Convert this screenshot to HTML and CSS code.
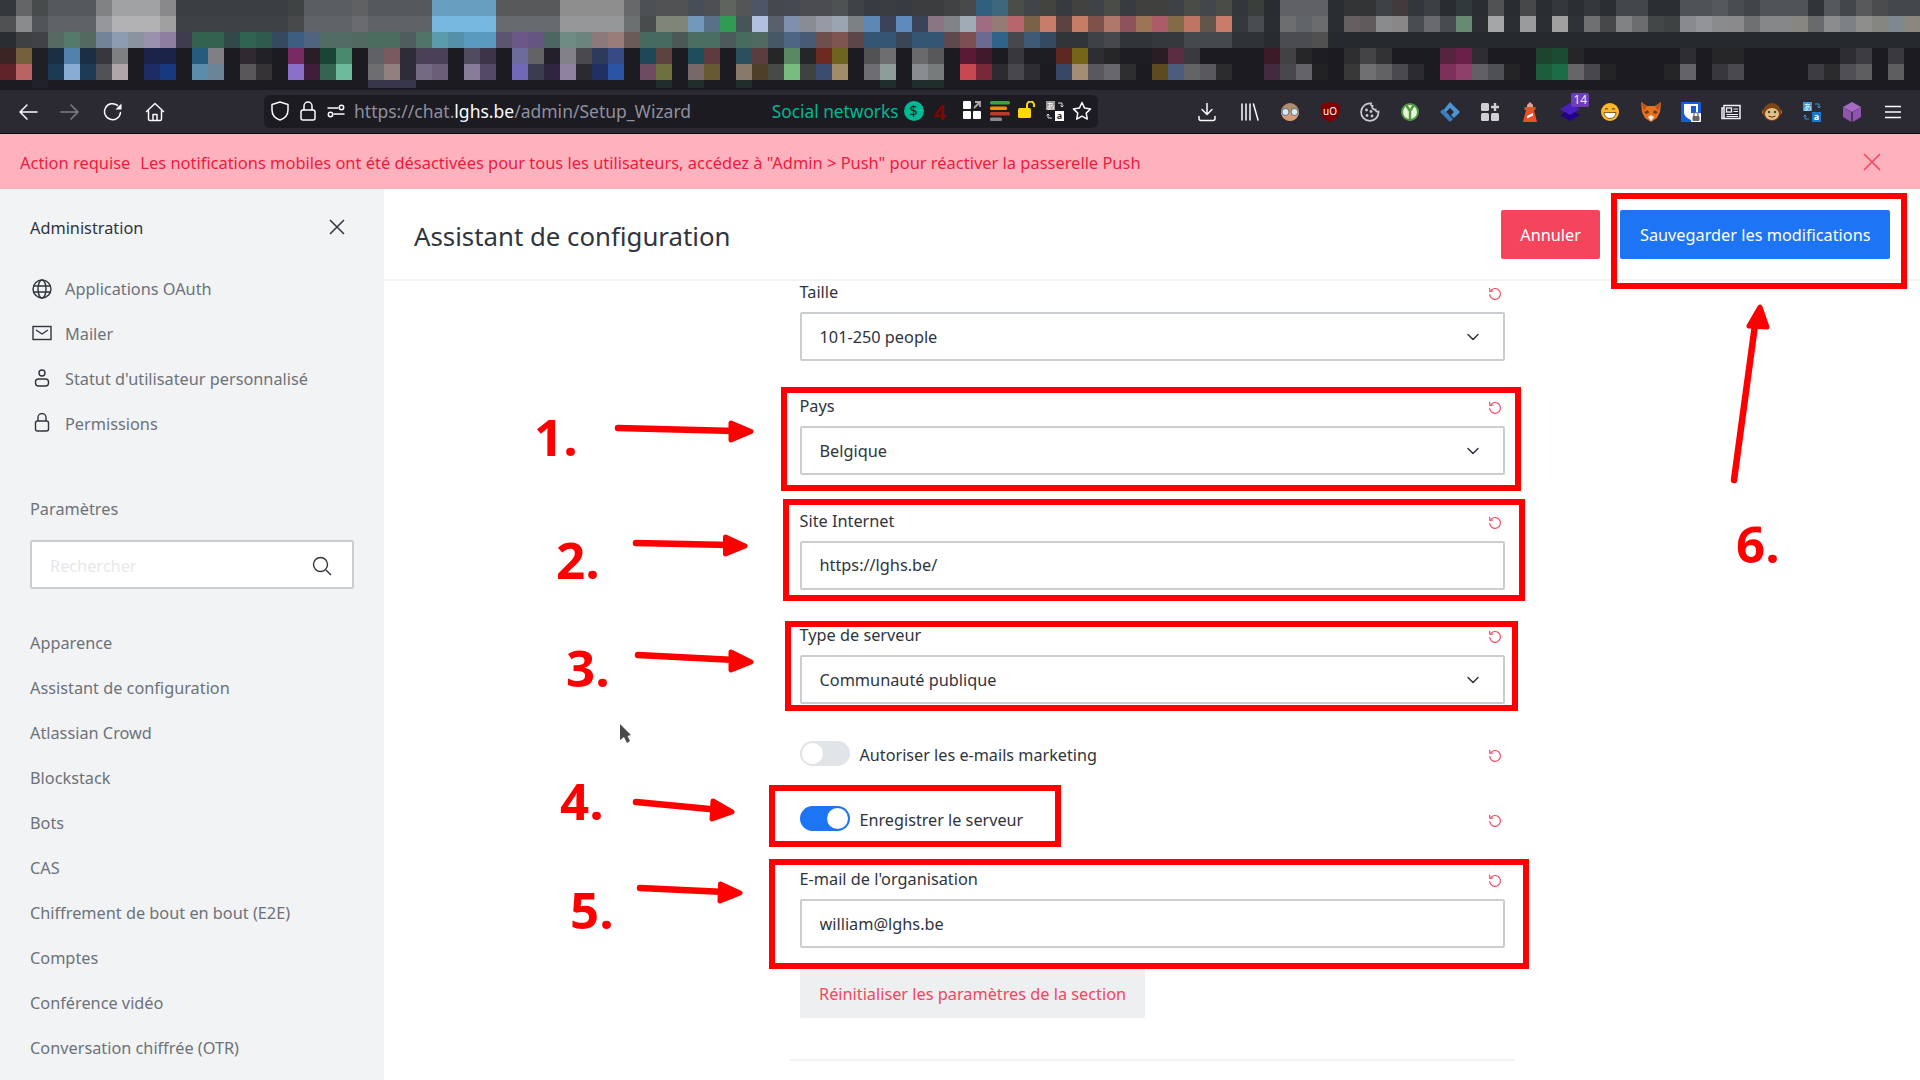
FILE: index.html
```html
<!DOCTYPE html>
<html lang="fr">
<head>
    <meta charset="UTF-8">
    <title>Assistant de configuration</title>
    <link rel="stylesheet" href="styles.css">
</head>
<body>
    <svg class="defs" width="0" height="0">
        <symbol id="i-reset" viewBox="0 0 14 14">
            <path d="M3.2 3.1A5.4 5.4 0 1 1 1.7 7.6" fill="none" stroke="currentColor" stroke-width="1.2" stroke-linecap="round"/>
            <path d="M1.6 1.4l.3 3 3-.4" fill="none" stroke="currentColor" stroke-width="1.2" stroke-linecap="round" stroke-linejoin="round"/>
        </symbol>
        <symbol id="i-chevron" viewBox="0 0 14 14">
            <path d="M2 4.5l5 5 5-5" fill="none" stroke="currentColor" stroke-width="1.5" stroke-linecap="round" stroke-linejoin="round"/>
        </symbol>
    </svg>

    <!-- blurred tabs -->
    <div id="tabstrip"></div>

    <div class="toolbar">
        <div class="tb-btn"><svg width="20" height="20" viewBox="0 0 20 20"><path d="M19 10H2m0 0l7-7M2 10l7 7" class="ln"/></svg></div>
        <div class="tb-btn off"><svg width="20" height="20" viewBox="0 0 20 20"><path d="M1 10h17m0 0l-7-7m7 7l-7 7" class="ln"/></svg></div>
        <div class="tb-btn nudge"><svg width="20" height="20" viewBox="0 0 20 20"><path d="M17.5 10.5A8 8 0 1 1 14.5 3.4" class="ln"/><path d="M18.5 1.5v6h-6z" fill="#fbfbfe"/></svg></div>
        <div class="tb-btn nudge"><svg width="20" height="20" viewBox="0 0 20 20"><path d="M1.5 9.5L10 1.5l8.500 8M3.500 8.500V17a1.500 1.500 0 0 0 1.500 1.500h10a1.500 1.500 0 0 0 1.500-1.500V8.500M8 18.500V12.500h4v6" class="ln"/></svg></div>

        <div class="urlbar">
            <div class="ub-icons">
                <svg width="18" height="20" viewBox="0 0 18 20"><path d="M9 1l8 2.500V9c0 5-3.500 8.500-8 10C4.500 17.500 1 14 1 9V3.500z" class="ln"/></svg>
                <svg width="16" height="20" viewBox="0 0 16 20"><rect x="1" y="9" width="14" height="10" rx="2" class="ln"/><path d="M4 9V5a4 4 0 0 1 8 0v4" class="ln"/></svg>
                <svg width="18" height="14" viewBox="0 0 18 14"><path d="M1 4h10M7 10h10" class="ln"/><circle cx="14.500" cy="3.500" r="2.200" class="ln"/><circle cx="3.500" cy="10.500" r="2.200" class="ln"/></svg>
            </div>
            <div class="url">https://chat.<b>lghs.be</b>/admin/Setup_Wizard</div>
            <div class="ub-right">
                <span class="social">Social networks</span>
                <span class="dollar">$</span>
                <span class="count">4</span>
                <div class="ub-acts">
                    <div class="ub-act"><svg width="18" height="18" viewBox="0 0 18 18"><rect x="0" y="0" width="8" height="8" rx="1" fill="#fff"/><rect x="0" y="10" width="8" height="8" rx="1" fill="#fff"/><rect x="10" y="10" width="8" height="8" rx="1" fill="#fff"/><path d="M11 7l6-6m-5 0h5v5" fill="none" stroke="#aaa" stroke-width="1.800"/></svg></div>
                    <div class="ub-act"><svg width="20" height="20" viewBox="0 0 20 20"><rect x="0" y="0" width="20" height="3.500" rx="1.500" fill="#43a047"/><rect x="0" y="5.500" width="17" height="3.500" rx="1.500" fill="#fb8c00"/><rect x="0" y="11" width="20" height="3.500" rx="1.500" fill="#c0392b"/><rect x="0" y="16.500" width="12" height="3.500" rx="1.500" fill="#8a8a8a"/></svg></div>
                    <div class="ub-act"><svg width="18" height="18" viewBox="0 0 18 18"><rect x="0" y="7" width="13" height="10" rx="1.500" fill="#ffd60a"/><path d="M9 7V4a3.500 3.500 0 0 1 7 0v2" fill="none" stroke="#ffd60a" stroke-width="2"/></svg></div>
                    <div class="ub-act"><svg width="18" height="20" viewBox="0 0 18 20"><rect x="0" y="0" width="9" height="9" fill="#999"/><text x="4.500" y="7.500" class="tr-a" fill="#fff">あ</text><path d="M12 2h4v4m-1.500-1.500L16 6l1.500-1.500" fill="none" stroke="#ddd" stroke-width="1"/><path d="M6 17H2v-4m-1.500 1.500L2 13l1.500 1.500" fill="none" stroke="#ddd" stroke-width="1"/><rect x="9" y="10" width="9" height="10" fill="#fff"/><text x="13.500" y="18" class="tr-b" fill="#333">a</text></svg></div>
                    <div class="ub-act"><svg width="20" height="20" viewBox="0 0 20 20"><path d="M10 1.500l2.600 5.600 6 .8-4.400 4.200 1.100 6-5.300-3-5.300 3 1.100-6L1.400 7.900l6-.8z" class="ln"/></svg></div>
                </div>
            </div>
        </div>

        <div class="exts">
            <div class="ext"><svg width="20" height="20" viewBox="0 0 20 20"><path d="M10 1.500v11m-5-5l5 5 5-5M2 14.500v2a2 2 0 0 0 2 2h12a2 2 0 0 0 2-2v-2" class="ln"/></svg></div>
            <div class="ext"><svg width="18" height="18" viewBox="0 0 18 18"><path d="M1 1v16M5 1v16M9 1v16M12.500 1l4.500 16" class="ln"/></svg></div>
            <div class="ext"><svg width="20" height="20" viewBox="0 0 20 20"><circle cx="10" cy="10" r="9" fill="#b08d6a"/><path d="M1 10a9 9 0 0 0 18 0z" fill="#d99a76"/><circle cx="5.500" cy="10" r="3.500" fill="#cfeef2" stroke="#557" stroke-width=".8"/><circle cx="14.500" cy="10" r="3.500" fill="#cfeef2" stroke="#557" stroke-width=".8"/></svg></div>
            <div class="ext"><svg width="18" height="20" viewBox="0 0 18 20"><path d="M9 0l9 2.500V10c0 5-4 8.500-9 10-5-1.500-9-5-9-10V2.500z" fill="#800000"/><text x="9" y="12.500" class="ub-txt">uO</text></svg></div>
            <div class="ext"><svg width="20" height="20" viewBox="0 0 20 20"><path d="M11 1.500a8.700 8.700 0 1 0 7.500 8c-1.500.5-3-.500-3-2-2 .5-4-1.500-3-3.500-1.500-.5-2-1.500-1.500-2.500z" fill="none" stroke="#c8c8cc" stroke-width="1.800"/><circle cx="6.500" cy="8" r="1.400" fill="#c8c8cc"/><circle cx="11" cy="9.500" r="1.400" fill="#c8c8cc"/><circle cx="7" cy="13.500" r="1.400" fill="#c8c8cc"/><circle cx="12" cy="14" r="1.400" fill="#c8c8cc"/></svg></div>
            <div class="ext"><svg width="18" height="18" viewBox="0 0 18 18"><circle cx="9" cy="9" r="9" fill="#4e9a3c"/><circle cx="9" cy="9" r="7" fill="#e8f2df"/><path d="M5 2l4 6 4-6M9 7v11" fill="none" stroke="#4e9a3c" stroke-width="2.400"/></svg></div>
            <div class="ext"><svg width="20" height="20" viewBox="0 0 20 20"><path d="M10 0l10 10-6 6-3-3 3-3-4-4-4 4 3 3-1 1-6-4z" fill="#4b95d6"/><path d="M10 20L0 10l3-3 7 7 3 3z" fill="#3a7fbd"/></svg></div>
            <div class="ext"><svg width="18" height="18" viewBox="0 0 18 18"><rect x="0" y="0" width="8" height="8" rx="1.500" fill="#d0d0d2"/><rect x="0" y="10" width="8" height="8" rx="1.500" fill="#d0d0d2"/><rect x="10" y="10" width="8" height="8" rx="1.500" fill="#d0d0d2"/><path d="M14 0v8M10 4h8" stroke="#d0d0d2" stroke-width="2.400"/></svg></div>
            <div class="ext"><svg width="14" height="20" viewBox="0 0 14 20"><path d="M7 0l3 3v3H4V3z" fill="#e8a090"/><rect x="1.500" y="5" width="11" height="3" fill="#e4512b"/><path d="M3 8h8l3 12H0z" fill="#e8502a"/><path d="M4 14l6-3v2.500l-6 3z" fill="#fff"/></svg></div>
            <div class="ext stack">
                <svg width="20" height="20" viewBox="0 0 20 20"><path d="M10 7l10 6-10 6-10-6z" fill="#24008a"/><path d="M10 1l10 6-10 6L0 7z" fill="#4a1fbf"/></svg>
                <span class="ext-badge">14</span>
            </div>
            <div class="ext"><svg width="18" height="18" viewBox="0 0 18 18"><circle cx="9" cy="9" r="9" fill="#fbb829"/><path d="M3 9.500h12a6 6 0 0 1-12 0z" fill="#fff" stroke="#6b4210" stroke-width=".8"/><path d="M4 6.500q1.500-2 3 0M11 6.500q1.500-2 3 0" fill="none" stroke="#6b4210" stroke-width="1.100"/></svg></div>
            <div class="ext"><svg width="20" height="20" viewBox="0 0 20 20"><path d="M0 0l6 4h8l6-4-1 10-3 6-6 4-6-4-3-6z" fill="#e8731f"/><path d="M3 10l4-2 1 3-3 1zM17 10l-4-2-1 3 3 1z" fill="#7a3b10"/><path d="M7 15l3-2 3 2-3 4z" fill="#eee"/><path d="M0 0l6 4-3 5zM20 0l-6 4 3 5z" fill="#b9551a"/></svg></div>
            <div class="ext"><svg width="20" height="20" viewBox="0 0 20 20"><rect width="20" height="20" fill="#175ddc"/><path d="M3 2h14v8c0 4-3 6-7 8-4-2-7-4-7-8z" fill="#fff"/><path d="M10 4h5v6c0 2.500-2.500 4.500-5 5.500z" fill="#175ddc"/><rect x="10" y="11" width="10" height="9" rx="1" fill="#fff"/><rect x="11.500" y="14" width="7" height="5" rx="1" fill="#666"/><path d="M13 14v-1.500a2 2 0 0 1 4 0V14" fill="none" stroke="#666" stroke-width="1.200"/></svg></div>
            <div class="ext"><svg width="20" height="16" viewBox="0 0 20 16"><path d="M3 1.500h16v13H3zM3 4H1v10.500h2" fill="none" stroke="#f0f0f4" stroke-width="1.500"/><rect x="5.500" y="4" width="5" height="4" fill="none" stroke="#f0f0f4" stroke-width="1.300"/><path d="M12.500 5h4.500M12.500 7.500h4.500M5.500 10.500h11.500M5.500 12.500h11.500" stroke="#f0f0f4" stroke-width="1.200"/></svg></div>
            <div class="ext"><svg width="20" height="20" viewBox="0 0 20 20"><circle cx="2.500" cy="10" r="2.500" fill="#b3722e"/><circle cx="17.500" cy="10" r="2.500" fill="#b3722e"/><circle cx="10" cy="10" r="9" fill="#7d4416"/><ellipse cx="10" cy="12" rx="7" ry="6" fill="#e8c08a"/><circle cx="7" cy="10" r="1.300" fill="#1f5f2a"/><circle cx="13" cy="10" r="1.300" fill="#1f5f2a"/><path d="M6.500 14q3.500 2.500 7 0" fill="none" stroke="#5a2f0c" stroke-width="1"/></svg></div>
            <div class="ext"><svg width="18" height="20" viewBox="0 0 18 20"><rect x="0" y="0" width="9" height="9" fill="#3a96dd"/><text x="4.500" y="7.500" class="tr-a" fill="#fff">あ</text><path d="M12 2h4v4m-1.500-1.500L16 6l1.500-1.500" fill="none" stroke="#3a96dd" stroke-width="1"/><path d="M6 17H2v-4m-1.500 1.500L2 13l1.500 1.500" fill="none" stroke="#3a96dd" stroke-width="1"/><rect x="9" y="10" width="9" height="10" fill="#1e78c8"/><text x="13.500" y="18" class="tr-b" fill="#fff">a</text></svg></div>
            <div class="ext"><svg width="18" height="20" viewBox="0 0 18 20"><path d="M9 0l9 5-9 5-9-5z" fill="#a66cc4"/><path d="M0 5l8.300 5v10L0 15z" fill="#8f54b0"/><path d="M18 5l-8.300 5v10L18 15z" fill="#8f54b0"/></svg></div>
            <div class="ext"><svg width="16" height="14" viewBox="0 0 16 14"><path d="M0 1.500h16M0 7h16M0 12.500h16" stroke="#fbfbfe" stroke-width="1.600"/></svg></div>
        </div>
    </div>

    <div class="banner">
        <p class="banner-text"><span class="banner-title">Action requise</span>Les notifications mobiles ont été désactivées pour tous les utilisateurs, accédez à "Admin &gt; Push" pour réactiver la passerelle Push</p>
        <svg class="banner-close" width="18" height="18" viewBox="0 0 18 18"><path d="M1 1l16 16M17 1L1 17" stroke="#f5455c" stroke-width="1.600"/></svg>
    </div>

    <div class="app">
        <aside class="sidebar">
            <div class="side-head">
                <span>Administration</span>
                <svg width="16" height="16" viewBox="0 0 16 16"><path d="M1 1l14 14M15 1L1 15" stroke="#2f343d" stroke-width="1.500"/></svg>
            </div>
            <ul class="side-list">
                <li class="side-item">
                    <svg width="20" height="20" viewBox="0 0 20 20" class="ic"><circle cx="10" cy="10" r="9"/><ellipse cx="10" cy="10" rx="4" ry="9"/><path d="M1.500 7h17M1.500 13h17"/></svg>
                    Applications OAuth
                </li>
                <li class="side-item">
                    <svg width="20" height="16" viewBox="0 0 20 16" class="ic up"><rect x="1" y="1.500" width="18" height="13"/><path d="M4 5l6 4 6-4"/></svg>
                    Mailer
                </li>
                <li class="side-item">
                    <svg width="20" height="20" viewBox="0 0 20 20" class="ic up"><circle cx="10" cy="5" r="3"/><rect x="3.500" y="11" width="13" height="7" rx="3"/></svg>
                    Statut d'utilisateur personnalisé
                </li>
                <li class="side-item">
                    <svg width="20" height="20" viewBox="0 0 20 20" class="ic up"><rect x="3.500" y="8" width="13" height="10" rx="2"/><path d="M6 8V4.500a4 4 0 0 1 8 0V8"/></svg>
                    Permissions
                </li>
            </ul>
            <div class="side-label">Paramètres</div>
            <div class="side-search">
                <span class="placeholder">Rechercher</span>
                <svg width="20" height="20" viewBox="0 0 20 20" class="ic dark"><circle cx="8.500" cy="8.500" r="7"/><path d="M14 14l5 5"/></svg>
            </div>
            <ul class="side-list groups">
                <li class="side-item">Apparence</li>
                <li class="side-item">Assistant de configuration</li>
                <li class="side-item">Atlassian Crowd</li>
                <li class="side-item">Blockstack</li>
                <li class="side-item">Bots</li>
                <li class="side-item">CAS</li>
                <li class="side-item">Chiffrement de bout en bout (E2E)</li>
                <li class="side-item">Comptes</li>
                <li class="side-item">Conférence vidéo</li>
                <li class="side-item">Conversation chiffrée (OTR)</li>
            </ul>
        </aside>

        <main class="content">
            <header class="page-head">
                <h1>Assistant de configuration</h1>
                <div class="page-btns">
                    <button class="btn danger">Annuler</button>
                    <button class="btn primary">Sauvegarder les modifications</button>
                </div>
            </header>

            <div class="form">
                <div class="field">
                    <div class="field-top"><label>Taille</label><svg class="reset"><use href="#i-reset"/></svg></div>
                    <div class="select">101-250 people<svg class="chev"><use href="#i-chevron"/></svg></div>
                </div>
                <div class="field">
                    <div class="field-top"><label>Pays</label><svg class="reset"><use href="#i-reset"/></svg></div>
                    <div class="select">Belgique<svg class="chev"><use href="#i-chevron"/></svg></div>
                </div>
                <div class="field">
                    <div class="field-top"><label>Site Internet</label><svg class="reset"><use href="#i-reset"/></svg></div>
                    <input class="input" type="text" value="https://lghs.be/">
                </div>
                <div class="field">
                    <div class="field-top"><label>Type de serveur</label><svg class="reset"><use href="#i-reset"/></svg></div>
                    <div class="select">Communauté publique<svg class="chev"><use href="#i-chevron"/></svg></div>
                </div>
                <div class="toggle-row first">
                    <span class="toggle"></span>
                    <span class="toggle-label">Autoriser les e-mails marketing</span>
                    <svg class="reset"><use href="#i-reset"/></svg>
                </div>
                <div class="toggle-row">
                    <span class="toggle on"></span>
                    <span class="toggle-label">Enregistrer le serveur</span>
                    <svg class="reset"><use href="#i-reset"/></svg>
                </div>
                <div class="field email">
                    <div class="field-top"><label>E-mail de l'organisation</label><svg class="reset"><use href="#i-reset"/></svg></div>
                    <input class="input" type="text" value="william@lghs.be">
                </div>
                <button class="btn reset-section">Réinitialiser les paramètres de la section</button>
            </div>
            <div class="divider"></div>
        </main>
    </div>

    <!-- annotations drawn over the screenshot -->
    <div class="box box-1"></div>
    <div class="box box-2"></div>
    <div class="box box-3"></div>
    <div class="box box-4"></div>
    <div class="box box-5"></div>
    <div class="box box-6"></div>
    <span class="num num-1">1.</span>
    <span class="num num-2">2.</span>
    <span class="num num-3">3.</span>
    <span class="num num-4">4.</span>
    <span class="num num-5">5.</span>
    <span class="num num-6">6.</span>
    <svg class="arrows" width="1920" height="1080" viewBox="0 0 1920 1080">
        <g class="arrow">
            <path d="M618 428L735 431"/><polygon points="731,423 751,431.500 731,440"/>
            <path d="M636 543L730 545"/><polygon points="725.500,537 745,546 725.500,554"/>
            <path d="M638 655L735 660"/><polygon points="731,652 751,662 731,670"/>
            <path d="M636 802L720 810"/><polygon points="713,801 732,812 712,819"/>
            <path d="M640 888L725 892"/><polygon points="720.500,884 740,893 720,901"/>
            <path d="M1734 480L1755 325"/><polygon points="1760,307 1749,326 1767,327"/>
        </g>
        <polygon class="cursor" points="620,724 620,740 624,737 627,743 630,741 627.500,736 631,735"/>
    </svg>

    <script src="pixels.js"></script>
</body>
</html>
```

FILE: styles.css
```css
* {
    box-sizing: border-box;
}

html, body {
    margin: 0;
    height: 1080px;
    overflow: hidden;
}

body {
    position: relative;
    font-family: "Noto Sans", sans-serif;
    font-size: 16.3px;
    color: #2f343d;
    background: #fff;
}

.defs {
    position: absolute;
}

/* tab strip */
#tabstrip {
    height: 90px;
    background: #1c1b22;
    overflow: hidden;
}

.px-row {
    display: flex;
    height: 16px;
}

.px-row.short {
    height: 8px;
}

.px {
    flex: 0 0 16px;
}

/* browser toolbar */
.toolbar {
    display: flex;
    align-items: center;
    height: 44px;
    padding: 0 7px;
    background: #2b2a33;
    border-bottom: 1px solid #0c0c0d;
}

.ln {
    fill: none;
    stroke: #fbfbfe;
    stroke-width: 1.5;
    stroke-linecap: round;
    stroke-linejoin: round;
}

.tb-btn {
    flex: 0 0 42px;
    display: flex;
    justify-content: center;
}

.tb-btn.nudge {
    padding-left: 1px;
}

.tb-btn.off {
    opacity: .4;
}

.urlbar {
    display: flex;
    align-items: center;
    width: 834px;
    height: 33px;
    margin-left: 89px;
    margin-bottom: 1px;
    padding: 0 2px 0 7px;
    background: #1c1b22;
    border-radius: 6px;
}

.ub-icons {
    display: flex;
    align-items: center;
    gap: 11px;
}

.url {
    margin-left: 9px;
    font-size: 17.5px;
    color: #8f8f9d;
    white-space: nowrap;
}

.url b {
    font-weight: 400;
    color: #fbfbfe;
}

.ub-right {
    display: flex;
    align-items: center;
    margin-left: auto;
}

.social {
    font-size: 17.3px;
    color: #00b894;
}

.dollar {
    width: 20px;
    height: 20px;
    margin-left: 5px;
    border-radius: 50%;
    background: #00b894;
    color: #1c1b22;
    font-size: 14px;
    line-height: 20px;
    text-align: center;
}

.count {
    width: 15px;
    margin-left: 10px;
    margin-right: 10px;
    font-size: 22px;
    font-weight: 700;
    color: #7a0606;
}

.ub-acts {
    display: flex;
}

.ub-act {
    flex: 0 0 27.5px;
    display: flex;
    justify-content: center;
}

.tr-a {
    font-family: "Noto Sans CJK JP", sans-serif;
    font-size: 8px;
    text-anchor: middle;
}

.tr-b {
    font-size: 9px;
    font-weight: 700;
    text-anchor: middle;
}

.ub-txt {
    font-size: 10px;
    fill: #fff;
    text-anchor: middle;
}

.exts {
    display: flex;
    margin-left: auto;
}

.ext {
    position: relative;
    flex: 0 0 40.35px;
    display: flex;
    justify-content: center;
    align-items: center;
}

.ext:nth-child(-n+10) {
    flex-basis: 40px;
}

.ext:first-child {
    flex-basis: 47px;
}

.ext-badge {
    position: absolute;
    top: -9px;
    right: 1px;
    width: 18px;
    height: 14px;
    border-radius: 2px;
    background: #6f3dbb;
    color: #f0eaff;
    font-size: 12px;
    line-height: 14px;
    text-align: center;
}

/* red notice */
.banner {
    display: flex;
    align-items: center;
    justify-content: space-between;
    height: 55px;
    padding: 0 39px 0 20px;
    background: #fdb2bd;
    color: #ee1a3f;
    font-size: 16.45px;
}

.banner-text {
    margin: 2px 0 0;
}

.banner-title {
    margin-right: 10px;
}

/* layout */
.app {
    display: flex;
    height: 891px;
}

.sidebar {
    flex: 0 0 384px;
    padding: 0 30px;
    background: #f2f3f5;
    overflow: hidden;
}

.side-head {
    display: flex;
    align-items: center;
    justify-content: space-between;
    height: 77px;
    padding-right: 9px;
}

.side-head svg {
    margin-top: -2px;
}

.side-list {
    margin: 0;
    padding: 0;
    list-style: none;
}

.side-item {
    display: flex;
    align-items: center;
    gap: 11px;
    height: 45px;
    color: #6c727a;
    white-space: nowrap;
}

.ic {
    flex: 0 0 24px;
    fill: none;
    stroke: #2f343d;
    stroke-width: 1.4;
}

.ic.up {
    margin-top: -2px;
}

.ic.dark {
    flex: none;
}

.side-label {
    margin-top: 51px;
    line-height: 24px;
    color: #6c727a;
}

.side-search {
    display: flex;
    align-items: center;
    justify-content: space-between;
    height: 49px;
    margin-top: 19px;
    padding: 2px 20px 0 18px;
    background: #fff;
    border: 2px solid #cbced1;
    border-radius: 2px;
}

.placeholder {
    color: #e6e8eb;
}

.groups {
    margin-top: 31px;
}

/* main */
.content {
    flex: 1;
    display: flex;
    flex-direction: column;
    align-items: center;
}

.page-head {
    align-self: stretch;
    display: flex;
    align-items: center;
    justify-content: space-between;
    height: 92px;
    padding: 1px 30px 0;
    border-bottom: 2px solid #f2f3f5;
}

.page-head h1 {
    margin: 3px 0 0;
    font-size: 25.8px;
    font-weight: 400;
}

.page-btns {
    display: flex;
    gap: 20px;
}

.btn {
    height: 49px;
    padding: 0 19.500px;
    border: none;
    border-radius: 2px;
    font: inherit;
    color: #fff;
    white-space: nowrap;
}

.btn.danger {
    background: #f5455c;
}

.btn.primary {
    background: #1d74f5;
}

.form {
    width: 705px;
}

.field {
    margin-bottom: 34.4px;
}

.field-top {
    display: flex;
    align-items: center;
    justify-content: space-between;
    height: 24px;
    margin-bottom: 7px;
    padding-right: 3px;
}

.field-top label {
    margin-top: -2px;
}

.reset {
    width: 14px;
    height: 14px;
    margin-top: 2px;
    color: #f5455c;
}

.select, .input {
    display: flex;
    align-items: center;
    justify-content: space-between;
    width: 100%;
    height: 49px;
    padding: 0 23px 0 18px;
    background: #fff;
    border: 2px solid #cbced1;
    border-radius: 2px;
    font: inherit;
    color: #2f343d;
}

.chev {
    width: 14px;
    height: 14px;
    color: #2f343d;
}

.toggle-row {
    display: flex;
    align-items: center;
    height: 25px;
    margin-bottom: 40px;
    padding-right: 3px;
}

.toggle-row.first {
    margin-top: 37px;
}

.toggle-label {
    margin-top: 2px;
    margin-left: 10px;
    font-size: 16.2px;
}

.toggle-row .reset {
    margin-top: 4px;
    margin-left: auto;
}

.toggle {
    position: relative;
    width: 50px;
    height: 25px;
    border-radius: 13px;
    background: #e1e5e8;
}

.toggle::after {
    content: "";
    position: absolute;
    top: 2px;
    left: 2px;
    width: 21px;
    height: 21px;
    border-radius: 50%;
    background: #fff;
}

.toggle.on {
    background: #1d74f5;
}

.toggle.on::after {
    left: 27px;
}

.email {
    margin-top: -3px;
    margin-bottom: 21px;
}

.reset-section {
    width: 345px;
    background: #eeeff1;
    color: #f5455c;
    text-align: left;
}

.divider {
    width: 725px;
    height: 2px;
    margin-top: 41px;
    background: #f2f3f5;
}

/* annotations */
.box {
    position: absolute;
    border: 6px solid #f00;
}

.box-1 { left: 781px; top: 387px; width: 740px; height: 104px; }
.box-2 { left: 783px; top: 499px; width: 742px; height: 102px; }
.box-3 { left: 785px; top: 621px; width: 733px; height: 90px; }
.box-4 { left: 769px; top: 785px; width: 292px; height: 62px; }
.box-5 { left: 769px; top: 859px; width: 760px; height: 110px; }
.box-6 { left: 1611px; top: 193px; width: 296px; height: 96px; }

.num {
    position: absolute;
    font-family: "Open Sans", sans-serif;
    font-size: 51px;
    font-weight: 700;
    line-height: 51px;
    color: #f00;
}

.num-1 { left: 534px; top: 411px; }
.num-2 { left: 556px; top: 534px; }
.num-3 { left: 566px; top: 642px; }
.num-4 { left: 560px; top: 775px; }
.num-5 { left: 570px; top: 884px; }
.num-6 { left: 1736px; top: 518px; }

.arrows {
    position: absolute;
    top: 0;
    left: 0;
    pointer-events: none;
}

.arrow path {
    fill: none;
    stroke: #f00;
    stroke-width: 6.5;
    stroke-linecap: round;
}

.arrow polygon {
    fill: #f00;
    stroke: #f00;
    stroke-width: 5;
    stroke-linejoin: round;
}

.cursor {
    fill: #4a4a4a;
}
```

FILE: pixels.js
```js
// colours of the blurred tab strip, one line per row, hex*count
const rows = [
  '33383a 636566 464b4c 56595b*3 808284 a1a2a3*3 89898b 3b3f42*7 404344 5a5e60*3 606163 56595b*4 689fc0*4 58595b*4 8e8e8e*4 666869 4e5154 505254*2 474e58 4c4e52 5e655f 545556 4e5566 45484c 454a52 4a4c50*2 4f5252 404346 363c42 3a3d40 363c42 3a3c3e*2 404244 48494b 31607f 3e667c 4b4d48 40454a 43443f 373b3f 424340 3f4345 4a4c48 383c40 40413e*2 3e4244 4a4c48 42454a 4a4c48 33373a 3a3f3c 292d30 5e6063*3 2a2e31 323436*2 3f4244 423a3c 33373a 3c4042 2a2d30 31393a 2a2e30 505254 2a2d30 474849 2a2e30 33383b 2b2f32 33393a 2b2f31 444749*2 2b2f32*2 505356*2 55585a 4a4d4f 414547 505456*3 303438 55585a 42464a 57595b 4a4c4e 45484b 44484b',
  '4f5153 8a8b8c 505557 606366*3 96979a b2b2b4*3 a0a0a1 3e4245*7 47494b 606468*3 6a6b6e 606366*4 75b7df*4 666a6d*4 959698*4 6d7071 484c4d 7d8677*2 7099bb 587088 2f9b52 455558 b2bfde 5a5f6c 7f8ead 888c94 959aa4 9aa5af 7d8184 5d87b5 3c4359 5e8abd 3a4357 8a7580 808486 9eabb5 a06c84 927c75 b8666c 7a6248 c87d68 5a4340 c47e66 7e514a b0776a 8e525a 9e7458 ab5c68 836a48 c07464 62564c c97d68 34393c 484e4f 2a2e32 6c6e70 626568 6b6c6d 2a2e31 645e60 5f5a5c 8a8b8d 8a8789 4a4d50 68696c 484c4e 688a73 2b2f31 a5a6a8 2b2f31 9a9b9d 2b2f31 a0a0a0 2e3336 6e7072 46484a 818284 6c6d6f 444748 3e4243 898a8d 939497 8a8b8d 8a8a8c 6e7072 858789*2 88877f 67696b 8b8c8e 7c8186 8d8d8c 848480 7f8890 8a8781',
  '292e32 3e4042 404246 566a63 557a6c 546a60 72839a 8d9cb0 8b92a0 9a90ac 8e7ea0 3f3c4f 326350*2 2f4a48 316353 2f5a4e 354a60 3d5e7e 4f6480 506c64*2 506860 4c6c60*2 4e5e5c 4f7468 5a9cac 5490a8 5a9ac0*2 5c5570 6c5888 645680 4e6662 6f8c84 6c827c 8c7a7a 9a7c78 6a5a58 466a60*2 4a5856 4a6e62*2 4c5a5a 466c5e 4e6a60 465868 4e6684 465a74 6c4e4c 7e5450 5c4648 345474*2 3a4656 345474*2 5e4a4e 7c5052 6c6a90 2f6488 46484c 3f5a76 34495f 303438*2 3e4146 46484c 303438*2 35383c*2 45484c*3 2e3336*2 272c30 4a4c50*2 50504f 252a2e*37',
  '3a2424 75603e 1f2024 1a2e44 5082ac 1c2e44 38383c 7e8082 1b1b20 1a2448*2 1b1b20 245a7c 808084 1b1b20 302a30 222226 1b1b20 7a2a62 2a1c26 1a4436 4a8a6c 1b1b20 5e6064 7a5a5e 2e2c38 4a4058*2 1b1b20 504a5e 3c3448 1b1b20 6c6c9c 636366 221e2a 828088 4a4a4e 2e3a5c 374a84 1b1b20 1e4858 5e4240 1b1b20 1e4e5c 5c3a3e 1b1b20 2a4e5a 5a3c3e 262628 5a8864 262628 6c2a20 6e6420 1b1b20 525254 6e6e70 1b1b20 6a6a6c 58585a 1b1b20 5a1a34 3e1a2c 1b1b20 38383c 1e1e22*2 5c2820 746418 2e2e32 262628 1e1e22*2 2a1e24 5a2c40 3a3a3e 1b1b20*4 3c1a28 424244 262628 1e1e22 1b1b20 2e2e30 444446 323234 1b1b20*3 56243e 6a2048 2e2e32 1b1b20*3 1e4430 1a4c34 262628 1b1b20*6 2e2e32 1b1b20 262628*2 1b1b20*6 2e2e32 3c3c40 1b1b20 3a3a3e 1b1b20',
  '602428 b86464 1f2024 1c3a54 88acd4 1e3a54 505256 b0a6aa 1b1b20 1c2c64 183880 1b1b20 5a8cac 6c8498 1b1b20 585658 343234 1b1b20 8a70c8 3e1c3a 356450 6cba9c 1b1b20 6e6e70 92807e 2e2c38 746a84 6a5e78 1b1b20 887c98 544a66 1b1b20 7268b8 3c3c50 2e2440 8e82a0 2a2a30 203060 2c54a4 1b1b20 6e4a60 6e7040 1b1b20 78686a 685a30 1b1b20 88786a 4e4028 484a48 78bc80 3e4240 3c4c70 a08c68 1b1b20 6e6e72 8e9c9a 1b1b20 888e90 767c7c 1b1b20 c84850 782838 2c2c30 48484c 2e2e32 1b1b20 384864 a28e74 58585e 68686c 2e2e30 1b1b20 5e4a20 4c5c7c 646466 58585e 2c2c2e 1b1b20*2 442a3e 48484c 646468 222224 1b1b20 383838 707072 626264 4a4a4e 2c2c30 1b1b20 7e3058 8e4068 606064 4e5054 242426 1b1b20 1e5c3e 1c6c48 666668 48484c 242426 1b1b20*3 252528 646468 1b1b20 38383c 4a4a4e 1b1b20*4 3c3c40 2a2a2c 505054 5e5e60 1b1b20 5e5e60 1b1b20',
  '1c1b22*2 20212a 1c1b22*20 38364a*3 1c1b22*15 1e2e2a 1c1b22 1e2e2a 1c1b22*2 1e2e2a 1c1b22*8 1e2e2a 1c1b22 1e2e2a*2 1c1b22*60'
];

const strip = document.getElementById('tabstrip');

rows.forEach((row, i) => {
    const line = document.createElement('div');
    line.className = i === 5 ? 'px-row short' : 'px-row';
    row.split(' ').forEach(item => {
        const [hex, count] = item.split('*');
        for (let n = 0; n < (count || 1); n++) {
            const cell = document.createElement('span');
            cell.className = 'px';
            cell.style.background = '#' + hex;
            line.appendChild(cell);
        }
    });
    strip.appendChild(line);
});
```
